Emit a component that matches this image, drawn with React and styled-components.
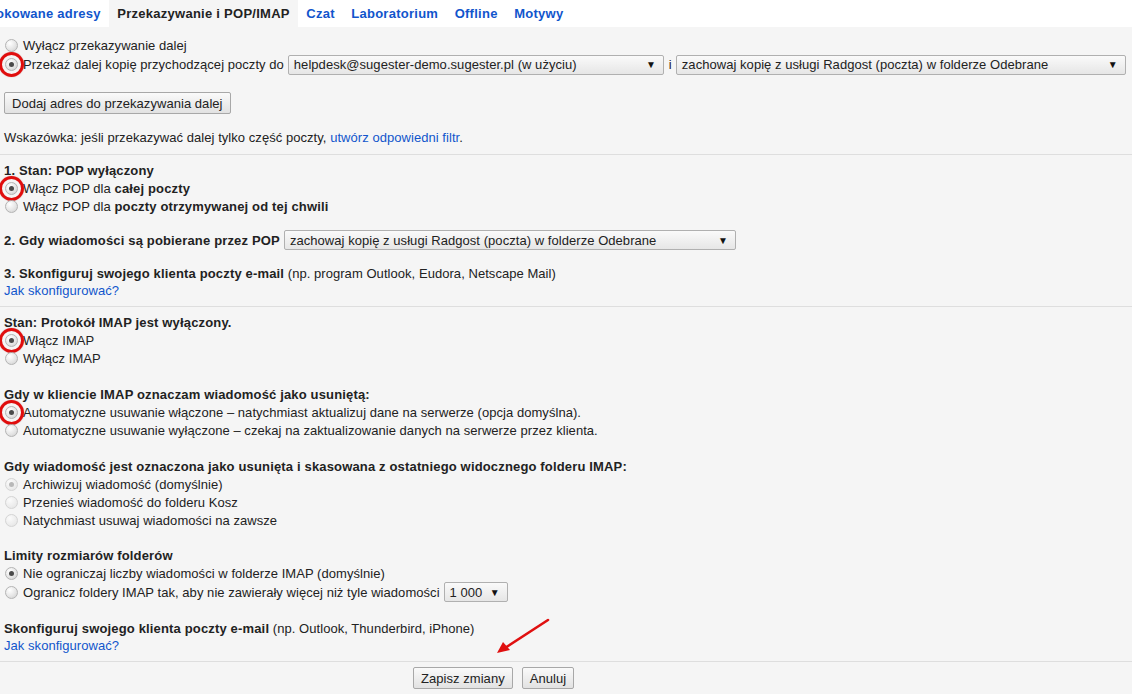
import React from 'react';
import styled, { createGlobalStyle, css } from 'styled-components';

const GlobalStyle = createGlobalStyle`
  html, body { margin: 0; padding: 0; }
  body {
    background: #f5f5f5;
    font-family: 'Liberation Sans', Arial, sans-serif;
    font-size: 13px;
    letter-spacing: 0.05px;
    color: #222;
  }
  b { letter-spacing: 0.16px; }
`;

const tabs = [
  { label: 'Blokowane adresy' },
  { label: 'Przekazywanie i POP/IMAP', active: true },
  { label: 'Czat' },
  { label: 'Laboratorium' },
  { label: 'Offline' },
  { label: 'Motywy' },
];

const App = () => {
  return (
    <>
      <GlobalStyle />
      <Page>
        <TabBarWrap>
          <TabBar>
            {tabs.map((t) => (
              <Tab key={t.label} $active={t.active}>{t.label}</Tab>
            ))}
          </TabBar>
        </TabBarWrap>

        <Section $pt={9}>
          <RadioRow>
            <Radio />
            Wyłącz przekazywanie dalej
          </RadioRow>
          <RadioRow $h={21}>
            <Radio $checked $marked />
            Przekaż dalej kopię przychodzącej poczty do
            <Select $w={376} $ml={4}>helpdesk@sugester-demo.sugester.pl (w użyciu)</Select>
            <Conj>i</Conj>
            <Select $w={450}>zachowaj kopię z usługi Radgost (poczta) w folderze Odebrane</Select>
          </RadioRow>
          <Group $mt={17}>
            <Button>Dodaj adres do przekazywania dalej</Button>
          </Group>
          <Hint>
            Wskazówka: jeśli przekazywać dalej tylko część poczty, <Link>utwórz odpowiedni filtr</Link>.
          </Hint>
        </Section>

        <Section>
          <Heading><b>1. Stan: POP wyłączony</b></Heading>
          <RadioRow>
            <Radio $checked $marked />
            Włącz POP dla&nbsp;<b>całej poczty</b>
          </RadioRow>
          <RadioRow>
            <Radio />
            Włącz POP dla&nbsp;<b>poczty otrzymywanej od tej chwili</b>
          </RadioRow>
          <SelectRow $mt={15}>
            <b>2. Gdy wiadomości są pobierane przez POP</b>
            <Select $w={452} $ml={4}>zachowaj kopię z usługi Radgost (poczta) w folderze Odebrane</Select>
          </SelectRow>
          <Group $mt={15}>
            <Heading>
              <b>3. Skonfiguruj swojego klienta poczty e-mail</b> (np. program Outlook, Eudora, Netscape Mail)
            </Heading>
            <Heading><Link>Jak skonfigurować?</Link></Heading>
          </Group>
        </Section>

        <Section>
          <Heading><b>Stan: Protokół IMAP jest wyłączony.</b></Heading>
          <RadioRow>
            <Radio $checked $marked />
            Włącz IMAP
          </RadioRow>
          <RadioRow>
            <Radio />
            Wyłącz IMAP
          </RadioRow>

          <Group $mt={19}>
            <Heading><b>Gdy w kliencie IMAP oznaczam wiadomość jako usuniętą:</b></Heading>
            <RadioRow>
              <Radio $checked $marked />
              Automatyczne usuwanie włączone – natychmiast aktualizuj dane na serwerze (opcja domyślna).
            </RadioRow>
            <RadioRow>
              <Radio />
              Automatyczne usuwanie wyłączone – czekaj na zaktualizowanie danych na serwerze przez klienta.
            </RadioRow>
          </Group>

          <Group $mt={19}>
            <Heading><b>Gdy wiadomość jest oznaczona jako usunięta i skasowana z ostatniego widocznego folderu IMAP:</b></Heading>
            <RadioRow>
              <Radio $checked $disabled />
              Archiwizuj wiadomość (domyślnie)
            </RadioRow>
            <RadioRow>
              <Radio $disabled />
              Przenieś wiadomość do folderu Kosz
            </RadioRow>
            <RadioRow>
              <Radio $disabled />
              Natychmiast usuwaj wiadomości na zawsze
            </RadioRow>
          </Group>

          <Group $mt={18}>
            <Heading><b>Limity rozmiarów folderów</b></Heading>
            <RadioRow>
              <Radio $checked />
              Nie ograniczaj liczby wiadomości w folderze IMAP (domyślnie)
            </RadioRow>
            <RadioRow $h={20}>
              <Radio />
              Ogranicz foldery IMAP tak, aby nie zawierały więcej niż tyle wiadomości
              <Select $w={64} $ml={4}>1 000</Select>
            </RadioRow>
          </Group>

          <Group $mt={18}>
            <Heading>
              <b>Skonfiguruj swojego klienta poczty e-mail</b> (np. Outlook, Thunderbird, iPhone)
            </Heading>
            <Heading><Link>Jak skonfigurować?</Link></Heading>
          </Group>
        </Section>

        <Footer>
          <Button>Zapisz zmiany</Button>
          <Button>Anuluj</Button>
        </Footer>

        <Arrow width="70" height="50" viewBox="0 0 70 50">
          <line x1="63" y1="8" x2="20" y2="36" stroke="#e01010" strokeWidth="2.6" strokeLinecap="round" />
          <polygon points="12,41 18,30 25,38" fill="#e01010" />
        </Arrow>
      </Page>
    </>
  );
};

export default App;

const Page = styled.div`
  position: relative;
  width: 1132px;
  height: 694px;
  overflow: hidden;
`;

const TabBarWrap = styled.div`
  background: #fff;
  height: 27px;
  overflow: hidden;
`;

const TabBar = styled.div`
  display: flex;
  margin-left: -26px;
  height: 27px;
`;

const Tab = styled.div`
  padding: 0 8px 0 8.5px;
  line-height: 28px;
  font-weight: bold;
  letter-spacing: 0.26px;
  white-space: nowrap;
  color: ${({ $active }) => ($active ? '#222' : '#15c')};
  background: ${({ $active }) => ($active ? '#f5f5f5' : '#fff')};
`;

const Section = styled.div`
  padding: ${({ $pt }) => $pt || 7}px 0 7px 4px;
  border-bottom: 1px solid #dedede;
`;

const Group = styled.div`
  margin-top: ${({ $mt }) => $mt || 0}px;
`;

const Heading = styled.div`
  height: 17px;
  line-height: 17px;
  white-space: nowrap;
`;

const RadioRow = styled.div`
  display: flex;
  align-items: center;
  height: ${({ $h }) => $h || 18}px;
  white-space: nowrap;
`;

const SelectRow = styled(RadioRow)`
  height: 20px;
  margin-top: ${({ $mt }) => $mt || 0}px;
`;

const Radio = styled.span`
  position: relative;
  flex: none;
  width: 13px;
  height: 13px;
  margin: 0 5px 0 1px;
  box-sizing: border-box;
  border-radius: 50%;
  border: 1px solid ${({ $disabled }) => ($disabled ? '#d4d4d4' : '#b4b4b4')};
  background: ${({ $disabled }) =>
    $disabled
      ? 'radial-gradient(circle at 35% 30%, #fbfbfb 0%, #ececec 60%, #e2e2e2 100%)'
      : 'radial-gradient(circle at 35% 30%, #ffffff 0%, #e6e6e6 55%, #cdcdcd 100%)'};
  ${({ $checked, $disabled }) =>
    $checked &&
    css`
      &::before {
        content: '';
        position: absolute;
        left: 3px;
        top: 3px;
        width: 5px;
        height: 5px;
        border-radius: 50%;
        background: ${$disabled ? '#b8b8b8' : '#4a4a4a'};
      }
    `}
  ${({ $marked }) =>
    $marked &&
    css`
      &::after {
        content: '';
        position: absolute;
        left: -7px;
        top: -7px;
        width: 25px;
        height: 25px;
        box-sizing: border-box;
        border-radius: 50%;
        border: 3px solid #e00d0d;
        box-shadow: 0 0 1px rgba(120, 0, 0, 0.5);
      }
    `}
`;

const Select = styled.div`
  display: flex;
  align-items: center;
  justify-content: space-between;
  box-sizing: border-box;
  width: ${({ $w }) => $w}px;
  height: 20px;
  margin-left: ${({ $ml }) => $ml || 0}px;
  padding: 0 7px 0 5px;
  border: 1px solid #b0b0b0;
  border-radius: 2px;
  background: linear-gradient(#fafafa, #e6e6e6);
  color: #222;
  overflow: hidden;

  &::after {
    content: '▼';
    font-size: 10px;
    color: #111;
    margin-left: 6px;
  }
`;

const Conj = styled.span`
  margin: 0 4px 0 5px;
`;

const Button = styled.div`
  display: inline-flex;
  align-items: center;
  height: 22px;
  box-sizing: border-box;
  padding: 0 7px;
  border: 1px solid #a8a8a8;
  border-radius: 2px;
  background: linear-gradient(#fafafa, #e2e2e2);
  color: #222;
  white-space: nowrap;
`;

const Hint = styled.div`
  margin-top: 15px;
  height: 18px;
  line-height: 18px;
`;

const Link = styled.span`
  color: #15c;
`;

const Footer = styled.div`
  display: flex;
  gap: 9px;
  padding: 5px 0 0 413px;
`;

const Arrow = styled.svg`
  position: absolute;
  left: 485px;
  top: 612px;
`;
